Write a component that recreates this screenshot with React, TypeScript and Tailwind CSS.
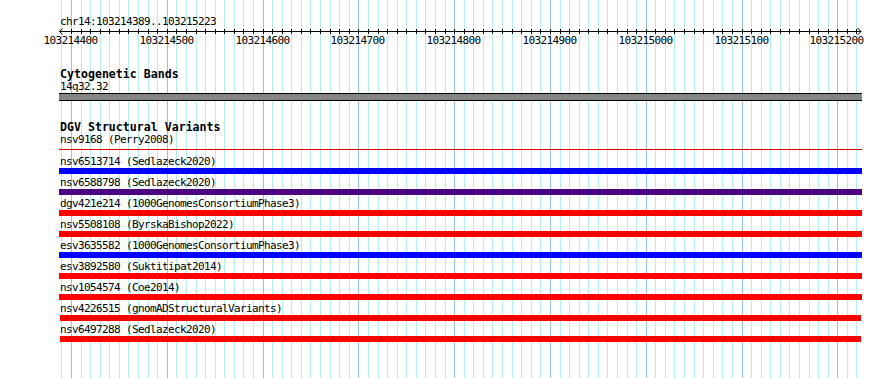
const START = 103214400;
const PX_PER_BP = 0.95788;
const X0 = 71;

const xAt = (bp: number) => Math.round(X0 + (bp - START) * PX_PER_BP) + 0.5;

const minor = Array.from({ length: 84 }, (_, i) => START + (i - 1) * 10);
const majors = Array.from({ length: 9 }, (_, i) => START + i * 100);

const variants = [
  { name: 'nsv6513714 (Sedlazeck2020)', color: 'bg-[#0000ff]', short: false },
  { name: 'nsv6588798 (Sedlazeck2020)', color: 'bg-[#4b0082]', short: false },
  { name: 'dgv421e214 (1000GenomesConsortiumPhase3)', color: 'bg-[#ff0000]', short: false },
  { name: 'nsv5508108 (ByrskaBishop2022)', color: 'bg-[#ff0000]', short: false },
  { name: 'esv3635582 (1000GenomesConsortiumPhase3)', color: 'bg-[#0000ff]', short: false },
  { name: 'esv3892580 (Suktitipat2014)', color: 'bg-[#ff0000]', short: false },
  { name: 'nsv1054574 (Coe2014)', color: 'bg-[#ff0000]', short: false },
  { name: 'nsv4226515 (gnomADStructuralVariants)', color: 'bg-[#ff0000]', short: true },
  { name: 'nsv6497288 (Sedlazeck2020)', color: 'bg-[#ff0000]', short: true },
];

const mono = "font-['DejaVu_Sans_Mono',monospace]";
const small = 'text-[11px] tracking-[-0.62px]';

function Grid() {
  return (
    <svg className="absolute inset-0" width={890} height={378}>
      {minor.map(bp => (
        <line
          key={bp}
          x1={xAt(bp)}
          x2={xAt(bp)}
          y1={0}
          y2={378}
          stroke={bp % 100 === 0 ? '#92c4e4' : '#b4eef0'}
          strokeWidth={1}
        />
      ))}
    </svg>
  );
}

function Ruler() {
  return (
    <svg width={890} height={20} className="block">
      <line x1={59} x2={861} y1={3.5} y2={3.5} stroke="#000" />
      <polyline points="62.5,0.5 59.5,3.5 62.5,6.5" fill="none" stroke="#000" />
      <polyline points="857.5,0 861,3.5 857.5,7" fill="none" stroke="#000" />
      {minor.slice(1).map(bp => (
        <line key={bp} x1={xAt(bp)} x2={xAt(bp)} y1={1} y2={6} stroke="#000" />
      ))}
      {majors.map(bp => (
        <text
          key={bp}
          x={xAt(bp) - 1}
          y={16}
          textAnchor="middle"
          fontFamily="DejaVu Sans Mono, monospace"
          fontSize={11}
          letterSpacing={-0.62}
          fill="#000"
        >
          {bp}
        </text>
      ))}
    </svg>
  );
}

export default function App() {
  return (
    <div className={`relative w-[890px] h-[378px] overflow-hidden bg-white text-black ${mono}`}>
      <Grid />
      <div className="relative pt-[15px]">
        <div className={`ml-[60px] h-[13px] ${small} leading-[13px]`}>chr14:103214389..103215223</div>
        <Ruler />

        <div className="mt-[20px] ml-[60px] h-[13px] text-[11.6px] font-bold leading-[13px]">Cytogenetic Bands</div>
        <div className={`ml-[60px] h-[12px] ${small} leading-[12px]`}>14q32.32</div>
        <div className="ml-[59px] w-[803px] h-[8px] border-y border-black bg-[#868586]" />

        <div className="mt-[20px] ml-[60px] h-[13px] text-[11.6px] font-bold leading-[13px]">DGV Structural Variants</div>
        <div className={`ml-[60px] h-[12px] ${small} leading-[12px]`}>nsv9168 (Perry2008)</div>
        <div className="mt-[3px] ml-[59px] w-[803px] h-px bg-[#dd0000]" />

        <div className="mt-[6px] flex flex-col gap-[3px]">
          {variants.map(v => (
            <div key={v.name} className="flex flex-col">
              <div className={`ml-[60px] h-[12px] ${small} leading-[12px] whitespace-nowrap`}>{v.name}</div>
              <div className={`${v.short ? 'ml-[60px] w-[801px]' : 'ml-[59px] w-[803px]'} h-[6px] ${v.color}`} />
            </div>
          ))}
        </div>
      </div>
    </div>
  );
}
